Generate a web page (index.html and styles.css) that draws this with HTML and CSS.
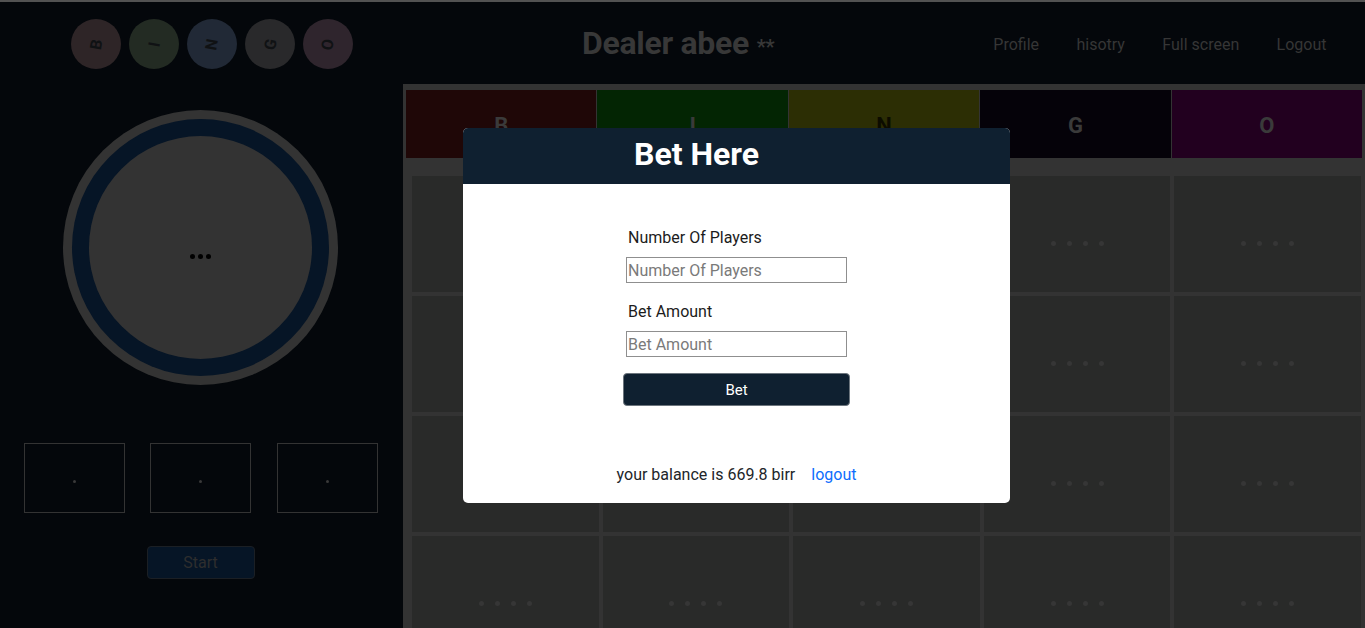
FILE: index.html
```html
<!DOCTYPE html>
<html lang="en">
<head>
<meta charset="utf-8">
<title>Dealer abee</title>
<link rel="stylesheet" href="styles.css">
</head>
<body>
<div class="topline"></div>
<header class="top">
  <div class="balls">
    <span class="ball ball-b"><span class="ball-letter">B</span></span>
    <span class="ball ball-i"><span class="ball-letter">I</span></span>
    <span class="ball ball-n"><span class="ball-letter">N</span></span>
    <span class="ball ball-g"><span class="ball-letter">G</span></span>
    <span class="ball ball-o"><span class="ball-letter">O</span></span>
  </div>
  <div class="brand">Dealer abee <span class="stars">**</span></div>
  <nav class="nav">
    <a class="nav-link">Profile</a>
    <a class="nav-link">hisotry</a>
    <a class="nav-link">Full screen</a>
    <a class="nav-link">Logout</a>
  </nav>
</header>
<main class="main">
  <aside class="left">
    <div class="dial">
      <div class="dial-ring">
        <div class="dial-core"><span class="dots"><i></i><i></i><i></i></span></div>
      </div>
    </div>
    <div class="recent">
      <div class="recent-box"><i></i></div>
      <div class="recent-box"><i></i></div>
      <div class="recent-box"><i></i></div>
    </div>
    <button class="start">Start</button>
  </aside>
  <section class="board">
    <div class="board-head">
      <div class="head-cell head-b">B</div>
      <div class="head-cell head-i">I</div>
      <div class="head-cell head-n">N</div>
      <div class="head-cell head-g">G</div>
      <div class="head-cell head-o">O</div>
    </div>
    <div class="board-grid">
      <div class="cell"><span class="cdots"><i></i><i></i><i></i><i></i></span></div>
      <div class="cell"><span class="cdots"><i></i><i></i><i></i><i></i></span></div>
      <div class="cell"><span class="cdots"><i></i><i></i><i></i><i></i></span></div>
      <div class="cell"><span class="cdots"><i></i><i></i><i></i><i></i></span></div>
      <div class="cell"><span class="cdots"><i></i><i></i><i></i><i></i></span></div>
      <div class="cell"><span class="cdots"><i></i><i></i><i></i><i></i></span></div>
      <div class="cell"><span class="cdots"><i></i><i></i><i></i><i></i></span></div>
      <div class="cell"><span class="cdots"><i></i><i></i><i></i><i></i></span></div>
      <div class="cell"><span class="cdots"><i></i><i></i><i></i><i></i></span></div>
      <div class="cell"><span class="cdots"><i></i><i></i><i></i><i></i></span></div>
      <div class="cell"><span class="cdots"><i></i><i></i><i></i><i></i></span></div>
      <div class="cell"><span class="cdots"><i></i><i></i><i></i><i></i></span></div>
      <div class="cell"><span class="cdots"><i></i><i></i><i></i><i></i></span></div>
      <div class="cell"><span class="cdots"><i></i><i></i><i></i><i></i></span></div>
      <div class="cell"><span class="cdots"><i></i><i></i><i></i><i></i></span></div>
      <div class="cell"><span class="cdots"><i></i><i></i><i></i><i></i></span></div>
      <div class="cell"><span class="cdots"><i></i><i></i><i></i><i></i></span></div>
      <div class="cell"><span class="cdots"><i></i><i></i><i></i><i></i></span></div>
      <div class="cell"><span class="cdots"><i></i><i></i><i></i><i></i></span></div>
      <div class="cell"><span class="cdots"><i></i><i></i><i></i><i></i></span></div>
    </div>
  </section>
</main>

<div class="modal">
  <div class="modal-head"><h2 class="modal-title">Bet Here</h2></div>
  <div class="modal-body">
    <form class="bet-form">
      <label class="field-label">Number Of Players</label>
      <input class="field-input" type="text" placeholder="Number Of Players">
      <label class="field-label">Bet Amount</label>
      <input class="field-input" type="text" placeholder="Bet Amount">
      <button class="bet-btn" type="button">Bet</button>
    </form>
    <p class="balance">your balance is 669.8 birr <a class="logout">logout</a></p>
  </div>
</div>
</body>
</html>
```

FILE: styles.css
```css
* { box-sizing: border-box; }
html, body { margin: 0; padding: 0; }
body {
  width: 1365px;
  height: 628px;
  overflow: hidden;
  background: #04070b;
  font-family: Roboto, "Liberation Sans", sans-serif;
  color: #3a3a3a;
}
.topline { height: 2px; background: #525252; }

.top {
  height: 82px;
  display: flex;
  align-items: center;
}
.balls {
  width: 403px;
  display: flex;
  gap: 8px;
  padding-left: 71px;
  padding-top: 2px;
}
.ball {
  width: 50px;
  height: 50px;
  border-radius: 50%;
  display: flex;
  align-items: center;
  justify-content: center;
}
.ball-letter {
  display: inline-block;
  transform: rotate(-80deg);
  font-weight: 700;
  font-size: 16px;
  color: #101214;
}
.ball-b { background: #2e2527; }
.ball-i { background: #232b23; }
.ball-n { background: #212936; }
.ball-g { background: #29292b; }
.ball-o { background: #2f252d; }

.brand {
  margin-left: 179px;
  font-size: 32px;
  font-weight: 700;
  color: #383838;
  letter-spacing: -0.3px;
}
.stars { font-size: 20px; }
.nav {
  margin-left: auto;
  display: flex;
  padding-right: 19.8px;
  padding-top: 2px;
}
.nav-link {
  padding: 0 18.7px;
  font-size: 16px;
  color: #363636;
}

.main { display: flex; }
.left {
  width: 403px;
  flex: none;
  display: flex;
  flex-direction: column;
  align-items: center;
  padding-right: 2px;
}
.dial {
  margin-top: 26px;
  width: 275px;
  height: 275px;
  border-radius: 50%;
  background: #333333;
  padding: 9px;
}
.dial-ring {
  width: 100%;
  height: 100%;
  border-radius: 50%;
  background: #061526;
  padding: 17px;
}
.dial-core {
  width: 100%;
  height: 100%;
  border-radius: 50%;
  background: #333333;
  display: flex;
  align-items: center;
  justify-content: center;
}
.dots { display: flex; gap: 3px; margin-top: 17px; }
.dots i { width: 5px; height: 5px; border-radius: 50%; background: #000; }

.recent {
  margin-top: 58px;
  display: flex;
  gap: 25.5px;
}
.recent-box {
  width: 101px;
  height: 70px;
  border: 1px solid #333333;
  display: flex;
  align-items: center;
  justify-content: center;
}
.recent-box i { width: 3px; height: 3px; border-radius: 50%; background: #3a3a3a; margin-top: 7px; }

.start {
  margin-top: 33px;
  width: 108px;
  height: 33px;
  background: #061526;
  border: 1px solid #1b1f24;
  border-radius: 4px;
  font-family: Roboto, "Liberation Sans", sans-serif;
  font-size: 16px;
  color: #2e2e2e;
}

.board {
  flex: 1;
  background: #333333;
  padding: 6px 3px 0 3px;
  height: 560px;
}
.board-head {
  display: grid;
  grid-template-columns: repeat(5, 1fr);
  gap: 1px;
  height: 68px;
}
.head-cell {
  display: flex;
  align-items: center;
  justify-content: center;
  font-size: 22px;
  font-weight: 700;
  color: #3a3a3a;
  padding-top: 3px;
}
.head-b { background: #1f0707; }
.head-i { background: #032503; }
.head-n { background: #2c2e04; color: #0c0c00; }
.head-g { background: #050209; }
.head-o { background: #22001f; }

.board-grid {
  display: grid;
  grid-template-columns: repeat(5, 1fr);
  grid-auto-rows: 116px;
  gap: 4px;
  padding: 18px 1px 0 6px;
}
.cell {
  background: #292a29;
  display: flex;
  align-items: center;
  justify-content: center;
}
.cdots { display: flex; gap: 11px; margin-top: 18px; }
.cdots i { width: 5px; height: 5px; border-radius: 50%; background: #363636; }

.modal {
  position: absolute;
  top: 128px;
  left: 463px;
  width: 547px;
  background: #ffffff;
  border-radius: 5px;
  overflow: hidden;
}
.modal-head {
  height: 56px;
  background: #0f2030;
  display: flex;
  align-items: center;
  justify-content: center;
  padding-right: 80px;
  padding-bottom: 4px;
}
.modal-title {
  margin: 0;
  font-size: 32px;
  font-weight: 700;
  color: #ffffff;
}
.modal-body {
  padding: 42px 0 16px;
  display: flex;
  flex-direction: column;
  align-items: center;
}
.bet-form {
  width: 227px;
  display: flex;
  flex-direction: column;
  align-items: center;
}
.field-label {
  align-self: flex-start;
  margin-left: 5px;
  font-size: 16px;
  line-height: 24px;
  color: #1c1c1c;
}
.field-input {
  width: 221px;
  height: 26px;
  margin: 7px 0 17px;
  border: 1px solid #8f8f8f;
  padding: 0 1px;
  font-family: Roboto, "Liberation Sans", sans-serif;
  font-size: 16px;
  color: #222;
}
.field-input::placeholder { color: #7a7a7a; }
.field-input:last-of-type { margin-bottom: 16px; }
.bet-btn {
  width: 227px;
  height: 33px;
  background: #0f2030;
  border: 1px solid #6c757d;
  border-radius: 4px;
  font-family: Roboto, "Liberation Sans", sans-serif;
  font-size: 15px;
  color: #ffffff;
}
.balance {
  margin: 57px 0 0;
  font-size: 16px;
  line-height: 24px;
  color: #212529;
}
.logout { color: #0d6efd; margin-left: 12px; }
```
